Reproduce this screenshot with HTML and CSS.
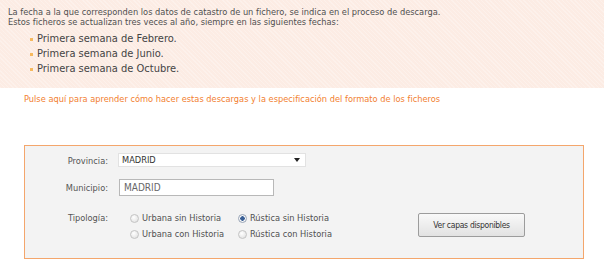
FILE: index.html
```html
<!DOCTYPE html>
<html lang="es">
  <head>
    <meta charset="UTF-8" />
    <title>Descarga de cartografía</title>
    <link rel="stylesheet" href="styles.css">
  </head>
  <body>
    <div class="intro">
      <p>La fecha a la que corresponden los datos de catastro de un fichero, se indica en el proceso de descarga.</p>
      <p>Estos ficheros se actualizan tres veces al año, siempre en las siguientes fechas:</p>
      <ul class="fechas">
        <li>Primera semana de Febrero.</li>
        <li>Primera semana de Junio.</li>
        <li>Primera semana de Octubre.</li>
      </ul>
    </div>
    <a class="ayuda" href="#">Pulse aquí para aprender cómo hacer estas descargas y la especificación del formato de los ficheros</a>

    <form class="filtro">
      <div class="fila">
        <label class="etiqueta" for="provincia">Provincia:</label>
        <div class="select">MADRID<span class="flecha"></span></div>
      </div>
      <div class="fila">
        <label class="etiqueta" for="municipio">Municipio:</label>
        <input class="texto" type="text" id="municipio" value="MADRID" />
      </div>
      <div class="fila tipos">
        <span class="etiqueta">Tipología:</span>
        <div class="opciones">
          <label class="opcion"><span class="radio"></span>Urbana sin Historia</label>
          <label class="opcion"><span class="radio marcado"></span>Rústica sin Historia</label>
          <label class="opcion"><span class="radio"></span>Urbana con Historia</label>
          <label class="opcion"><span class="radio"></span>Rústica con Historia</label>
        </div>
        <button class="boton" type="button">Ver capas disponibles</button>
      </div>
    </form>
  </body>
</html>
```

FILE: styles.css
```css
* {
  margin: 0;
  padding: 0;
  box-sizing: border-box;
}
body {
  font-family: "DejaVu Sans Condensed", "DejaVu Sans", sans-serif;
  font-size: 9.2px;
  color: #505050;
  background: #fff;
  width: 604px;
  overflow: hidden;
}
.intro {
  height: 88px;
  padding: 7px 8px 0 8px;
  background-color: #fcece4;
  background-image: repeating-linear-gradient(45deg, rgba(255, 255, 255, 0.25) 0 1px, transparent 1px 3px);
  line-height: 10px;
}
.fechas {
  list-style: none;
  margin-top: 4px;
  padding-left: 29px;
  font-size: 11px;
  line-height: 15px;
  color: #444;
}
.fechas li {
  position: relative;
}
.fechas li::before {
  content: "";
  position: absolute;
  left: -7px;
  top: 7px;
  width: 3px;
  height: 3px;
  background: #f6b95e;
}
.ayuda {
  display: block;
  margin: 6px 0 0 24px;
  color: #f28030;
  text-decoration: none;
  line-height: 10px;
}
.filtro {
  margin: 41px 0 0 24px;
  width: 560px;
  height: 114px;
  border: 1px solid #f4a66c;
  background: #f3f3f3;
  padding-top: 7px;
}
.fila {
  display: flex;
  align-items: center;
  margin-bottom: 12px;
}
.etiqueta {
  width: 93px;
  text-align: right;
  padding-right: 10px;
  color: #555;
}
.select {
  position: relative;
  width: 188px;
  height: 14px;
  background: #fff;
  border: 1px solid #e2e2e2;
  padding-left: 3px;
  line-height: 12px;
  color: #333;
}
.flecha {
  position: absolute;
  right: 5px;
  top: 4px;
  border-left: 3px solid transparent;
  border-right: 3px solid transparent;
  border-top: 4px solid #222;
}
.texto {
  width: 155px;
  height: 17px;
  margin-left: 1px;
  border: 1px solid #b8b8b8;
  background: #fff;
  padding-left: 4px;
  font: inherit;
  font-size: 10px;
  color: #666;
}
.tipos {
  margin-top: 11px;
  align-items: flex-start;
}
.tipos .etiqueta {
  margin-top: 4px;
}
.opciones {
  display: grid;
  grid-template-columns: 108px 120px;
  row-gap: 4px;
  margin: 4px 0 0 12px;
}
.opcion {
  display: flex;
  align-items: center;
  line-height: 12px;
}
.radio {
  width: 9px;
  height: 9px;
  border-radius: 50%;
  border: 1px solid #c4c4c4;
  background: radial-gradient(circle at 40% 35%, #fff, #dcdcdc);
  margin-right: 3px;
}
.radio.marcado {
  background: radial-gradient(circle, #3a5f95 0 2px, #fff 2.5px, #dcdcdc);
  border-color: #9aa6b8;
}
.boton {
  margin: 5px 0 0 60px;
  width: 107px;
  height: 24px;
  border: 1px solid #9c9c9c;
  border-radius: 2px;
  background: linear-gradient(#f9f9f9, #e2e2e2);
  font: inherit;
  font-size: 8.5px;
  letter-spacing: -0.3px;
  color: #333;
}
```
